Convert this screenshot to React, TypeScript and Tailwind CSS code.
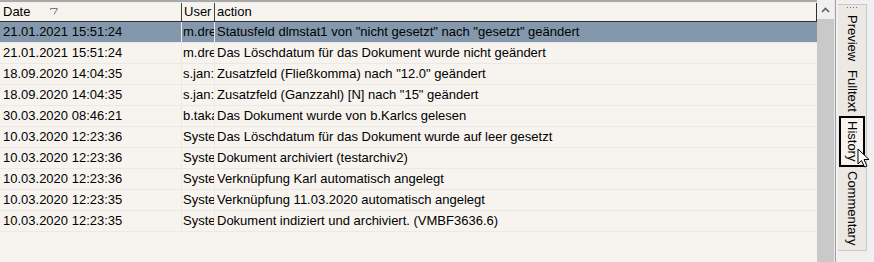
import React from "react";

const rows = [
  ["21.01.2021 15:51:24", "m.dre", 'Statusfeld dlmstat1 von "nicht gesetzt" nach "gesetzt" geändert'],
  ["21.01.2021 15:51:24", "m.dre", "Das Löschdatum für das Dokument wurde nicht geändert"],
  ["18.09.2020 14:04:35", "s.jan:", 'Zusatzfeld (Fließkomma) nach "12.0" geändert'],
  ["18.09.2020 14:04:35", "s.jan:", 'Zusatzfeld (Ganzzahl) [N] nach "15" geändert'],
  ["30.03.2020 08:46:21", "b.taka", "Das Dokument wurde von b.Karlcs gelesen"],
  ["10.03.2020 12:23:36", "Syste", "Das Löschdatum für das Dokument wurde auf leer gesetzt"],
  ["10.03.2020 12:23:36", "Syste", "Dokument archiviert (testarchiv2)"],
  ["10.03.2020 12:23:36", "Syste", "Verknüpfung Karl automatisch angelegt"],
  ["10.03.2020 12:23:35", "Syste", "Verknüpfung 11.03.2020 automatisch angelegt"],
  ["10.03.2020 12:23:35", "Syste", "Dokument indiziert und archiviert. (VMBF3636.6)"],
];

const tabs = [
  { label: "Preview", h: "h-[53px]" },
  { label: "Fulltext", h: "h-[51px]" },
  { label: "History", h: "h-[51px]", active: true },
  { label: "Commentary", h: "h-[83px]" },
];

export default function App() {
  return (
    <div className="relative w-[874px] h-[262px] flex bg-[#f7f4ef] text-black text-[13px] font-['Liberation_Sans',Tahoma,sans-serif] overflow-hidden">
      {/* table */}
      <div className="w-[817px] flex flex-col border-t-2 border-[#a9a9a9]">
        <div className="h-px bg-[#f0f0f0]" />
        <div className="flex h-[19px] border-b border-r border-[#303030] bg-[#f7f4ef]">
          <div className="w-[182px] border-r border-[#404040] pl-[3px] flex items-center relative">
            <span>Date</span>
            <svg className="absolute left-[50px] top-[5px]" width="8" height="7" viewBox="0 0 8 7">
              <path d="M0.5 0.5 H7.5 M0.5 0.5 V2 M7.5 0.5 L4 6.5" fill="none" stroke="#7a7a7a" strokeWidth="1" />
            </svg>
          </div>
          <div className="w-[33px] border-r border-[#404040] pl-[2px] flex items-center overflow-hidden">User</div>
          <div className="flex-1 pl-[2px] flex items-center">action</div>
        </div>
        {rows.map((r, i) => (
          <div
            key={i}
            className={`flex h-[21px] border-b border-[#ece8e2] whitespace-nowrap ${i === 0 ? "bg-[#8498ad]" : ""}`}
          >
            <div className="w-[182px] border-r border-[#ece8e2] pl-[3px] flex items-center">{r[0]}</div>
            <div className="w-[33px] border-r border-[#ece8e2] pl-[1px] flex items-center overflow-hidden">{r[1]}</div>
            <div className="flex-1 pl-[2px] flex items-center overflow-hidden">{r[2]}</div>
          </div>
        ))}
      </div>
      {/* scrollbar */}
      <div className="w-[17px] flex flex-col bg-[#c9c9c9]">
        <div className="h-[19px] bg-[#f0f0f0] flex items-center justify-center">
          <svg width="9" height="6" viewBox="0 0 9 6">
            <path d="M1 5 L4.5 1.5 L8 5" fill="none" stroke="#606060" strokeWidth="1.6" />
          </svg>
        </div>
        <div className="flex-1" />
      </div>
      <div className="w-[4px] flex">
        <div className="w-px bg-[#e9e9e9]" />
        <div className="w-px bg-[#a0a0a0]" />
        <div className="w-[2px] bg-[#f0f0f0]" />
      </div>
      {/* tabs */}
      <div className="flex-1 flex bg-[#f0f0f0]">
        <div className="w-[29px] h-[247px] flex flex-col border-r border-t border-b border-[#c8c8c8] bg-[#ece9e4] mt-[4px]">
          <div className="h-[7px] flex justify-center gap-[2px] pt-[2px]">
            {[0, 1, 2, 3].map((d) => (
              <div key={d} className="w-px h-px bg-[#707070]" />
            ))}
          </div>
          {tabs.map((t) => (
            <div
              key={t.label}
              className={`${t.h} flex items-center justify-center ${
                t.active ? "border-2 border-black mx-[1px] bg-[#f7f4ef]" : ""
              }`}
            >
              <div className="[writing-mode:vertical-rl] text-[13px] leading-none">{t.label}</div>
            </div>
          ))}
        </div>
        <div className="flex-1" />
      </div>
      <svg className="absolute left-[857px] top-[148px]" width="18" height="22" viewBox="0 0 18 22">
        <path d="M1 1 L1 16 L4.5 12.5 L7.5 19 L10 18 L7 11.5 L12 11.5 Z" fill="#fff" stroke="#000" strokeWidth="1" strokeLinejoin="round" />
      </svg>
    </div>
  );
}
